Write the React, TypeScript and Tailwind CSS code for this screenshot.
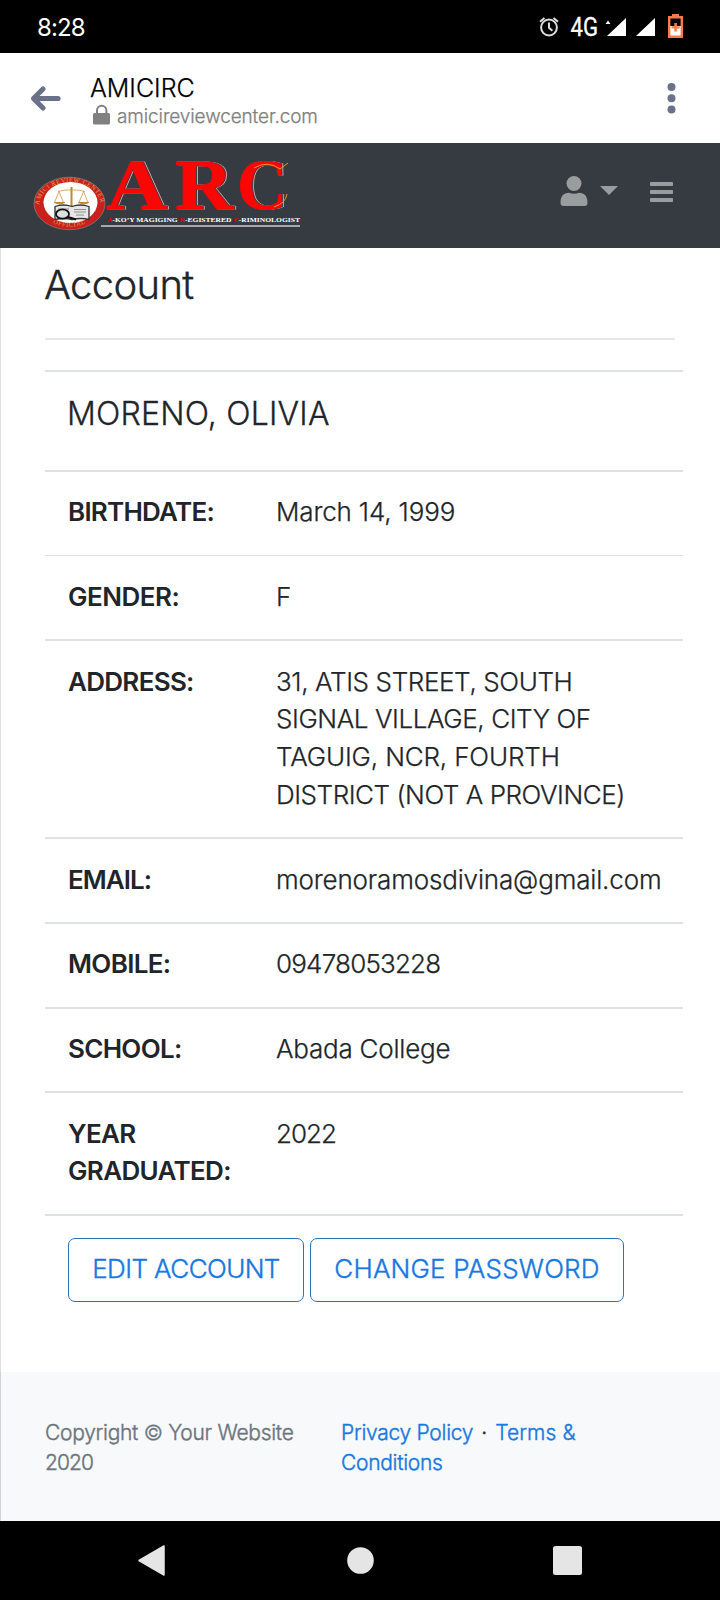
import type { ReactNode } from "react";

function StatusBar() {
  return (
    <header className="flex h-[53px] items-center bg-black pl-[37px] text-white">
      <span className="w-[502px] pt-[2px] text-[24px] leading-[51px] tracking-[-0.900px]">8:28</span>
      <svg className="h-[53px] w-[181px]" viewBox="539 0 181 53">
        <g fill="none" stroke="#ddd" strokeWidth="2">
          <circle cx="549" cy="27.500" r="7.900" />
          <path d="M549 22.500v5.300l3.400 3M540 21.800l4.500-3.900M558 21.800l-4.500-3.900" />
        </g>
        <text x="570.500" y="36" fill="#fff" fontFamily="Roboto, sans-serif" fontSize="26" fontWeight="400" textLength="27.500" lengthAdjust="spacingAndGlyphs" stroke="#fff" strokeWidth="0.300">4G</text>
        <path fill="#fff" d="M605.500 24l2.500-3.500 2.500 3.500zM607 36l19-18v18zM636 36l19-18v18z" />
        <path fill="#fff" d="M670 18h11v18h-11z" />
        <path fill="#000" d="M670 18h11v8h-11z" />
        <path fill="none" stroke="#f47b50" strokeWidth="2.400" d="M669.200 17.200h12.600v19.600h-12.600z" />
        <path fill="#f47b50" d="M672 14h7v3h-7zM674.300 23h2.600v3.200h2.800v2.400h-2.800v3h-2.600v-3h-2.800v-2.400h2.800z" />
      </svg>
    </header>
  );
}

function BrowserBar() {
  return (
    <div className="flex h-[90px] bg-white">
      <svg className="h-[90px] w-[90px]" viewBox="0 53 90 90">
        <path d="M43 89l-9.500 9.500 9.500 9.500M34 98.500h24" fill="none" stroke="#6b7287" strokeWidth="5.200" strokeLinecap="round" strokeLinejoin="round" />
      </svg>
      <div className="flex w-[540px] flex-col pt-[20px] [-webkit-text-stroke:0.250px]">
        <span className="text-[25px] leading-[31px] font-light text-black">AMICIRC</span>
        <div className="flex items-start">
          <svg className="h-[24px] w-[27px]" viewBox="90 104 27 24">
            <rect x="93" y="113" width="17" height="11.500" rx="1.500" fill="#808080" />
            <path d="M97 114v-3.500a4.700 4.700 0 0 1 9.400 0v3.500" fill="none" stroke="#808080" strokeWidth="2" />
          </svg>
          <span className="pt-px text-[19px] leading-[24px] font-light tracking-[-0.120px] text-[#808080]">amicireviewcenter.com</span>
        </div>
      </div>
      <svg className="h-[90px] w-[90px]" viewBox="630 53 90 90" fill="#6b7287">
        <circle cx="671.500" cy="87" r="4" />
        <circle cx="671.500" cy="98.200" r="4" />
        <circle cx="671.500" cy="109.500" r="4" />
      </svg>
    </div>
  );
}

const letters = [
  { c: "A", x: 106, w: 61 },
  { c: "R", x: 175, w: 58 },
  { c: "C", x: 237, w: 50 },
];

function Logo() {
  return (
    <svg className="h-[105px] w-[320px]" viewBox="0 143 320 105">
      <ellipse cx="69.500" cy="203.500" rx="35.500" ry="26.300" fill="#c9201c" stroke="#8d8f93" strokeWidth="0.600" />
      <ellipse cx="70.500" cy="202.500" rx="27" ry="20.500" fill="#fff" />
      <path id="sealTop" d="M39.500 205a30.500 23 0 0 1 61 0" fill="none" />
      <path id="sealBottom" d="M50 221.500q19.500 11 39 0" fill="none" />
      <g fontFamily="'Liberation Serif', serif" fontSize="6.500" fill="#e0a050">
        <text><textPath href="#sealTop" textLength="82">AMICI REVIEW CENTER</textPath></text>
        <text><textPath href="#sealBottom" startOffset="3" textLength="34">OFFICIAL</textPath></text>
      </g>
      <g stroke="#c08a28" fill="none" strokeWidth="1">
        <path d="M58 191.500q6-2 13.500-1.500q7.500-.5 13.500 1.500M59 191.500l-4.500 11M59 191.500l4.500 11M83.500 191.500l-4.500 11M83.500 191.500l4.500 11" strokeWidth="0.700" />
        <path d="M71.500 187v21" strokeWidth="2" />
        <path d="M54 202.500h11q-5 3-11 0M78 202.500h11q-5 3-11 0" fill="#d8a640" />
      </g>
      <path d="M55 206.500q8-3 17 0q8-3 17 0v13q-8-2-17 0q-8-2-17 0z" fill="#e6e6e6" stroke="#333" strokeWidth="1.300" />
      <path d="M58 209h11M74 209.500h12M74 212h12M76 215h8" stroke="#666" strokeWidth="0.700" />
      <ellipse cx="62.500" cy="214" rx="6.500" ry="4.700" fill="#dce0e3" stroke="#111" strokeWidth="1.800" />
      <path d="M68 217l8 2.500" stroke="#111" strokeWidth="2" />
      <g className="[filter:drop-shadow(1.500px_0.800px_0_#363a41)_drop-shadow(1px_0.500px_0_#d9a0a0)]" fontFamily="'Liberation Serif', serif" fontSize="72" fontWeight="700" fill="#fb0505">
        {letters.map((l) => (
          <text key={l.c} x={l.x} y="209" textLength={l.w} lengthAdjust="spacingAndGlyphs" stroke="#fb0505" strokeWidth="0.800">{l.c}</text>
        ))}
      </g>
      <path d="M254 168q14-8 26 1l8-6M287 194q-1 9-13 13" fill="none" stroke="#e8953a" strokeWidth="1" />
      <text x="107" y="222" fontFamily="'Liberation Serif', serif" fontWeight="700" fontSize="6.400" fill="#fff" textLength="193" lengthAdjust="spacingAndGlyphs">
        <tspan fill="#e00">A</tspan>-KO’Y MAGIGING <tspan fill="#e00">R</tspan>-EGISTERED <tspan fill="#e00">C</tspan>-RIMINOLOGIST
      </text>
      <path d="M101 226h199" stroke="#a6a8ab" strokeWidth="1.800" />
    </svg>
  );
}

function NavBar() {
  return (
    <nav className="flex h-[105px] justify-between bg-[#363a41]">
      <Logo />
      <svg className="h-[105px] w-[200px]" viewBox="520 143 200 105" fill="#9a9da0">
        <circle cx="574" cy="183.500" r="7.500" />
        <path d="M560.500 202.500c0-6 3-9.700 8.500-9.700q5 2 10 0c5.500 0 8.500 3.700 8.500 9.700q0 3.500-3 3.500h-21q-3 0-3-3.500z" />
        <path d="M600 186h18l-9 9z" />
        <rect x="650" y="182" width="23" height="4" rx="0.800" />
        <rect x="650" y="190" width="23" height="4" rx="0.800" />
        <rect x="650" y="198" width="23" height="4" rx="0.800" />
      </svg>
    </nav>
  );
}

type RowProps = { label: string; box: string; labelClass: string; valueClass?: string; children: ReactNode };

function Row({ label, box, labelClass, valueClass = "", children }: RowProps) {
  return (
    <div className={"flex border-[#dee2e6] pl-[23px] text-[26px] leading-[37.700px] " + box}>
      <div className={"w-[208px] shrink-0 pr-6 font-semibold " + labelClass}>{label}</div>
      <div className={"font-light whitespace-nowrap [-webkit-text-stroke:0.250px] " + valueClass}>{children}</div>
    </div>
  );
}

export default function App() {
  return (
    <div className="flex h-[1600px] w-[720px] flex-col overflow-hidden bg-white font-['Inter',sans-serif]">
      <StatusBar />
      <BrowserBar />
      <NavBar />
      <main className="flex h-[1124px] flex-col border-l border-[#dcdee0] pl-[44px] text-[#212529]">
        <h1 className="-ml-px h-[90px] pt-[14px] text-[40px] leading-[46px] font-light tracking-[-0.650px] [-webkit-text-stroke:0.350px]">Account</h1>
        <div className="h-[32px] w-[630px] border-t-2 border-[#e6e6e6]" />
        <div className="flex w-[638px] flex-col">
          <h2 className="h-[100px] border-t-2 border-[#dee2e6] pt-[22px] pl-[22px] text-[32px] leading-[40px] font-light tracking-[0.200px] [-webkit-text-stroke:0.300px]">MORENO, OLIVIA</h2>
          <Row label="BIRTHDATE:" box="h-[85px] border-t-2 pt-[21px]" labelClass="tracking-[-0.750px]" valueClass="tracking-[-0.150px]">March 14, 1999</Row>
          <Row label="GENDER:" box="h-[84px] border-t pt-[21.500px]" labelClass="tracking-[-0.500px]">F</Row>
          <Row label="ADDRESS:" box="h-[198px] border-t-2 pt-[21.500px]" labelClass="tracking-[-0.700px]">
            <div className="tracking-[-0.380px]">31, ATIS STREET, SOUTH</div>
            <div className="tracking-[-0.410px]">SIGNAL VILLAGE, CITY OF</div>
            <div className="tracking-[-0.150px]">TAGUIG, NCR, FOURTH</div>
            <div className="tracking-[-0.450px]">DISTRICT (NOT A PROVINCE)</div>
          </Row>
          <Row label="EMAIL:" box="h-[85px] border-t-2 pt-[21.500px]" labelClass="tracking-[-0.950px]" valueClass="tracking-[-0.160px]">morenoramosdivina@gmail.com</Row>
          <Row label="MOBILE:" box="h-[85px] border-t-2 pt-[21px]" labelClass="tracking-[-0.650px]" valueClass="tracking-[-0.800px]">09478053228</Row>
          <Row label="SCHOOL:" box="h-[84px] border-t-2 pt-[21px]" labelClass="tracking-[-0.700px]" valueClass="tracking-[-0.220px]">Abada College</Row>
          <Row label="YEAR GRADUATED:" box="h-[123px] border-t-2 pt-[21.500px]" labelClass="tracking-[-0.650px]" valueClass="tracking-[-1px]">2022</Row>
          <div className="flex gap-[6px] border-t-2 border-[#dee2e6] pt-[22px] pl-[23px] text-[26px] font-light text-[#1778e0] [-webkit-text-stroke:0.400px]">
            <button className="h-[64px] w-[236px] rounded-[7px] border border-[#2a74b8] pb-[3px] tracking-[-0.580px] whitespace-nowrap">EDIT ACCOUNT</button>
            <button className="h-[64px] w-[314px] rounded-[7px] border border-[#2a74b8] pb-[3px] tracking-[0.200px] whitespace-nowrap">CHANGE PASSWORD</button>
          </div>
        </div>
      </main>
      <footer className="flex h-[149px] border-l border-[#d0d3d6] bg-[#f8f9fb] pt-[46px] pl-[44px] text-[21px] leading-[30.200px] font-light whitespace-nowrap [-webkit-text-stroke:0.400px]">
        <div className="w-[296px] tracking-[-0.280px] text-[#6c757d]">Copyright © Your Website<br /><span className="tracking-[-0.900px]">2020</span></div>
        <div className="tracking-[-0.280px] text-[#1778e0]">Privacy Policy <span className="px-[2.500px] text-[#212529]">·</span> <span className="tracking-[0.100px]">Terms &amp;</span><br />Conditions</div>
      </footer>
      <div className="h-[79px] bg-black">
        <svg className="h-[79px] w-[720px]" viewBox="0 1521 720 79" fill="#e5e5e5">
          <path d="M139 1560.500L164 1546v29z" stroke="#e5e5e5" strokeWidth="1.500" strokeLinejoin="round" />
          <circle cx="360.500" cy="1560.500" r="13.300" />
          <rect x="553" y="1546" width="29" height="29" rx="2.500" />
        </svg>
      </div>
    </div>
  );
}
